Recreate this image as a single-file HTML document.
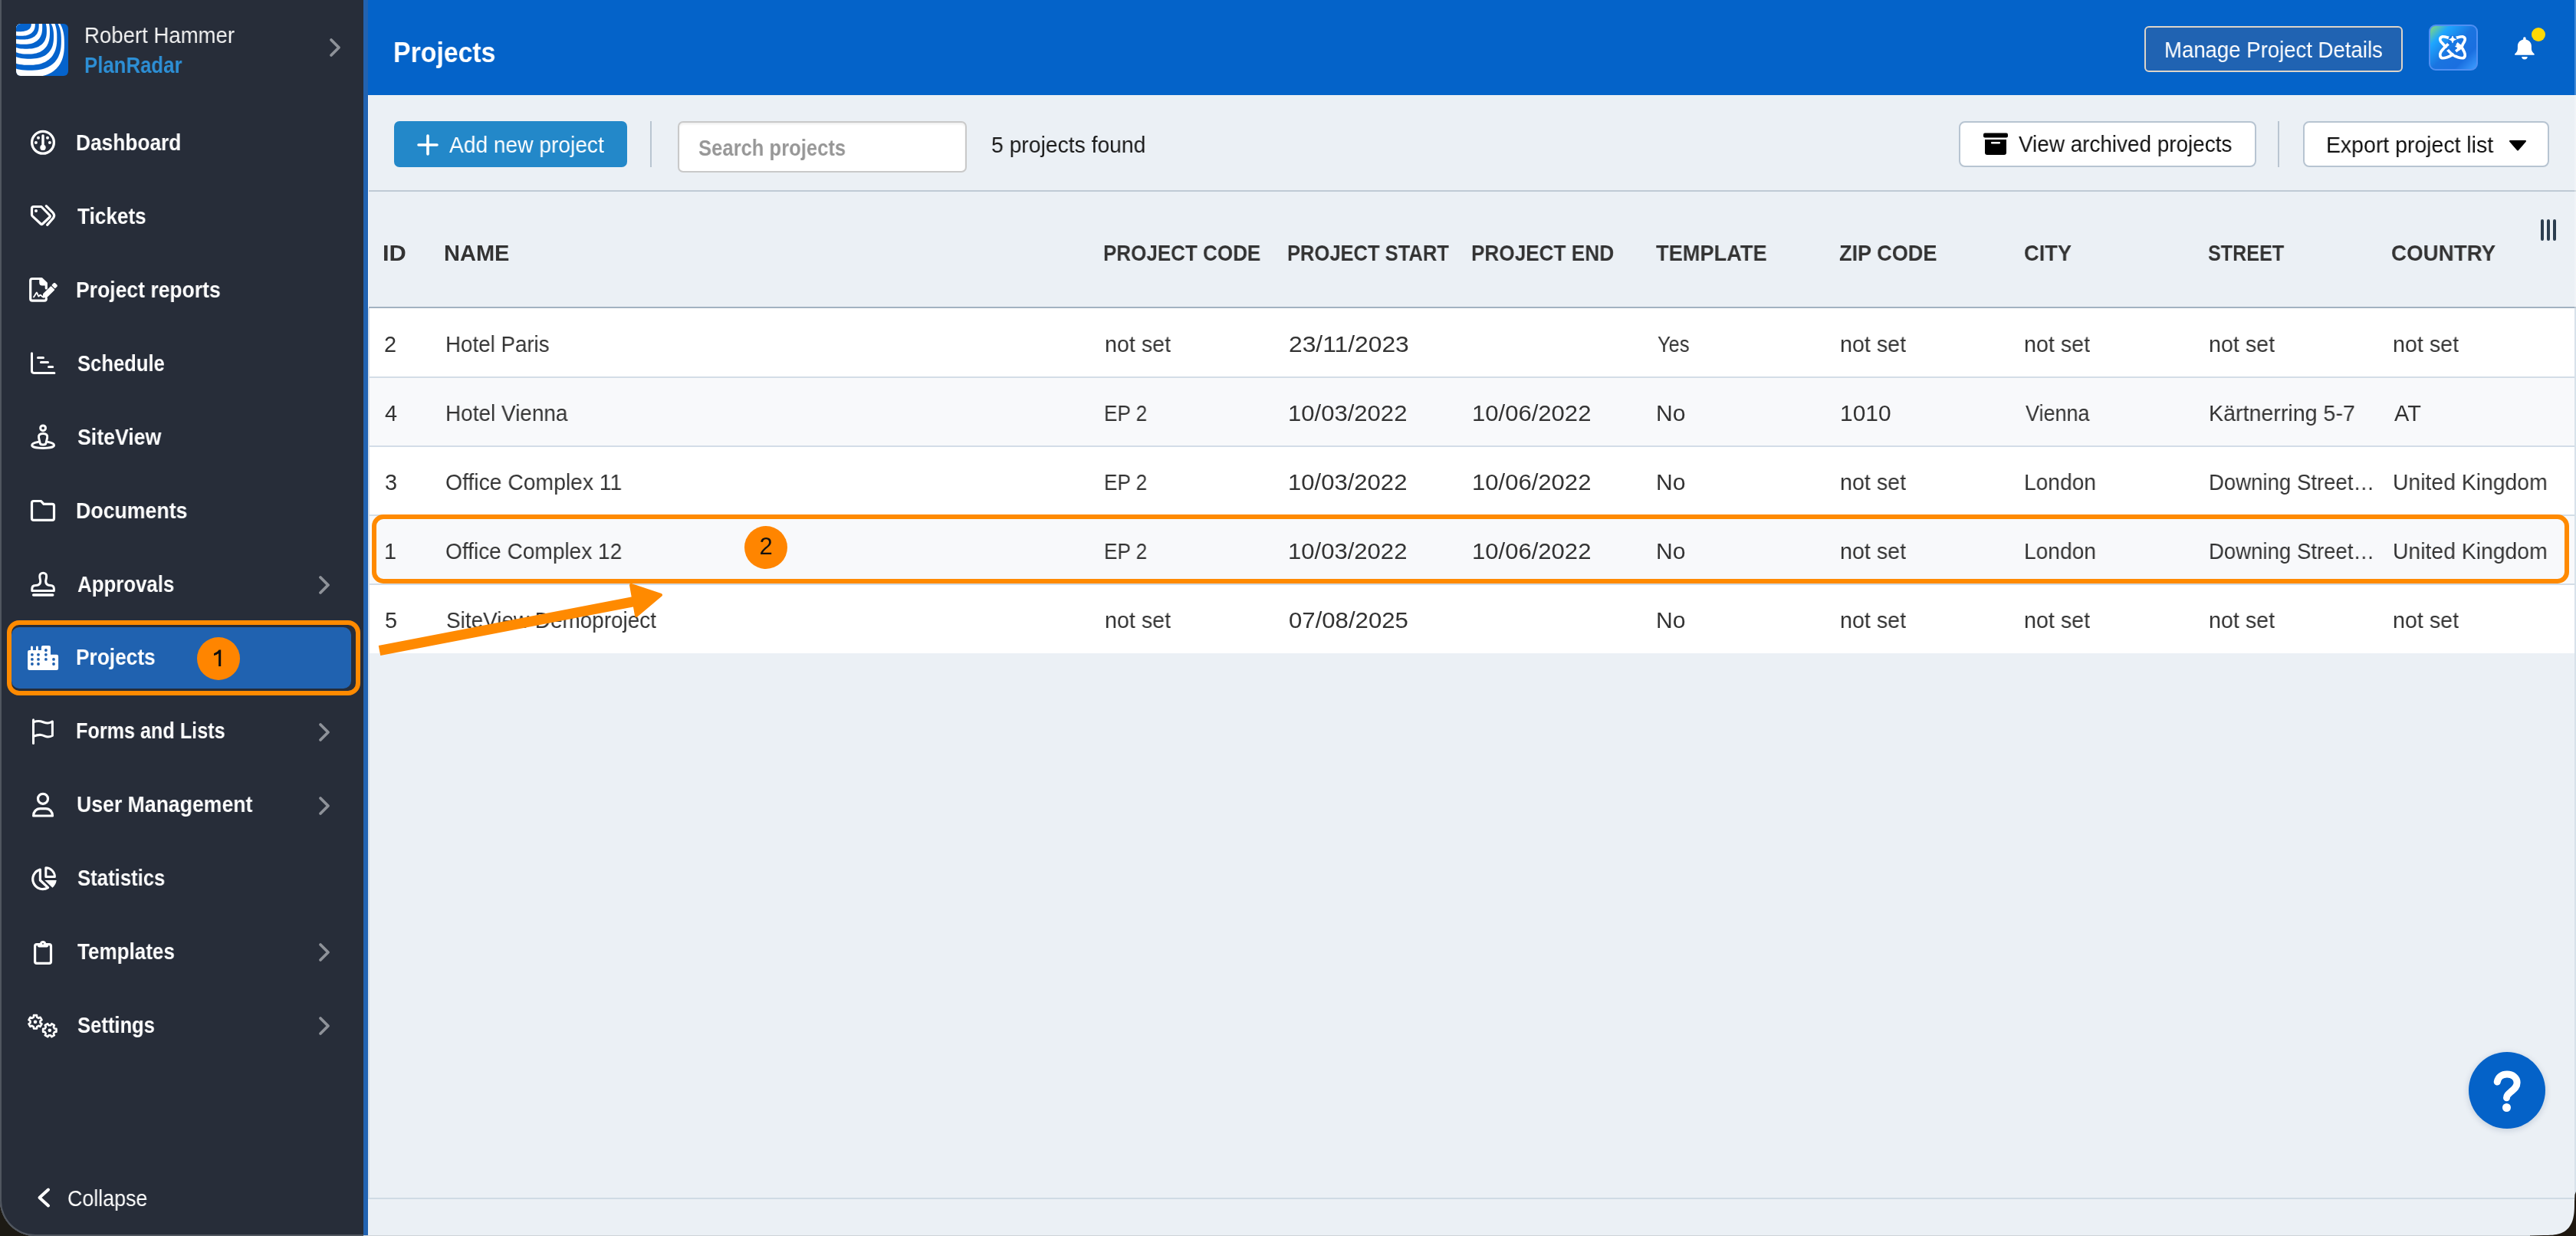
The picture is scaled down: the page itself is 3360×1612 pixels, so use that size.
<!DOCTYPE html><html><head><meta charset="utf-8"><style>
html,body{margin:0;padding:0;}
body{width:3360px;height:1612px;overflow:hidden;background:#1d1a14;position:relative;font-family:"Liberation Sans",sans-serif;}
#f{position:absolute;left:0;top:0;width:3360px;height:1612px;border-radius:0 0 0 46px;overflow:hidden;background:#ebf0f5;}
#f div, #f svg{position:absolute;}
.t{white-space:nowrap;will-change:transform;}
</style></head><body><div id="f">
<div style="left:0px;top:0px;width:474px;height:1612px;background:#272d39;"></div>
<div style="left:0px;top:0px;width:2px;height:1450px;background:#50565f;"></div>
<div style="left:0;top:1400px;width:300px;height:212px;box-sizing:border-box;border-left:2px solid #50565f;border-bottom:2px solid #50565f;border-bottom-left-radius:46px;"></div>
<div style="left:474px;top:0px;width:6px;height:1612px;background:#2263b1;"></div>
<svg style="left:21px;top:31px" width="68" height="68" viewBox="0 0 68 68"><defs><clipPath id="lc"><rect x="0" y="0" width="68" height="68" rx="6"/></clipPath></defs><g clip-path="url(#lc)"><rect width="68" height="68" fill="#0563cc"/><path d="M62.90 26.00 L62.81 31.17 L62.55 34.98 L62.11 38.38 L61.50 41.52 L60.72 44.44 L59.77 47.18 L58.64 49.76 L57.35 52.17 L55.90 54.44 L54.28 56.55 L52.50 58.50 L50.56 60.30 L48.46 61.95 L46.20 63.44 L43.79 64.77 L41.21 65.94 L38.47 66.95 L35.55 67.79 L32.43 68.46 L29.07 68.97 L25.37 69.31 L21.07 69.48 L14.93 69.48 L10.63 69.31 L6.93 68.97 L3.57 68.46 L0.45 67.79 L-2.47 66.95 L-5.21 65.94 L-7.79 64.77 L-10.20 63.44 L-12.46 61.95 L-14.56 60.30 L-16.50 58.50 L-18.28 56.55 L-19.90 54.44 L-21.35 52.17 L-22.64 49.76 L-23.77 47.18 L-24.72 44.44 L-25.50 41.52 L-26.11 38.38 L-26.55 34.98 L-26.81 31.17 L-26.90 26.00 L-26.81 20.83 L-26.55 17.02 L-26.11 13.62 L-25.50 10.48 L-24.72 7.56 L-23.77 4.82 L-22.64 2.24 L-21.35 -0.17 L-19.90 -2.44 L-18.28 -4.55 L-16.50 -6.50 L-14.56 -8.30 L-12.46 -9.95 L-10.20 -11.44 L-7.79 -12.77 L-5.21 -13.94 L-2.47 -14.95 L0.45 -15.79 L3.57 -16.46 L6.93 -16.97 L10.63 -17.31 L14.93 -17.48 L21.07 -17.48 L25.37 -17.31 L29.07 -16.97 L32.43 -16.46 L35.55 -15.79 L38.47 -14.95 L41.21 -13.94 L43.79 -12.77 L46.20 -11.44 L48.46 -9.95 L50.56 -8.30 L52.50 -6.50 L54.28 -4.55 L55.90 -2.44 L57.35 -0.17 L58.64 2.24 L59.77 4.82 L60.72 7.56 L61.50 10.48 L62.11 13.62 L62.55 17.02 L62.81 20.83 Z" fill="#fff"/><path d="M58.90 22.00 L58.82 26.60 L58.58 29.99 L58.18 33.02 L57.63 35.80 L56.91 38.40 L56.05 40.84 L55.02 43.13 L53.85 45.29 L52.52 47.30 L51.05 49.17 L49.42 50.92 L47.66 52.52 L45.75 53.98 L43.69 55.31 L41.49 56.49 L39.14 57.53 L36.65 58.43 L33.98 59.18 L31.14 59.78 L28.08 60.23 L24.72 60.53 L20.79 60.68 L15.21 60.68 L11.28 60.53 L7.92 60.23 L4.86 59.78 L2.02 59.18 L-0.65 58.43 L-3.14 57.53 L-5.49 56.49 L-7.69 55.31 L-9.75 53.98 L-11.66 52.52 L-13.42 50.92 L-15.05 49.17 L-16.52 47.30 L-17.85 45.29 L-19.02 43.13 L-20.05 40.84 L-20.91 38.40 L-21.63 35.80 L-22.18 33.02 L-22.58 29.99 L-22.82 26.60 L-22.90 22.00 L-22.82 17.40 L-22.58 14.01 L-22.18 10.98 L-21.63 8.20 L-20.91 5.60 L-20.05 3.16 L-19.02 0.87 L-17.85 -1.29 L-16.52 -3.30 L-15.05 -5.17 L-13.42 -6.92 L-11.66 -8.52 L-9.75 -9.98 L-7.69 -11.31 L-5.49 -12.49 L-3.14 -13.53 L-0.65 -14.43 L2.02 -15.18 L4.86 -15.78 L7.92 -16.23 L11.28 -16.53 L15.21 -16.68 L20.79 -16.68 L24.72 -16.53 L28.08 -16.23 L31.14 -15.78 L33.98 -15.18 L36.65 -14.43 L39.14 -13.53 L41.49 -12.49 L43.69 -11.31 L45.75 -9.98 L47.66 -8.52 L49.42 -6.92 L51.05 -5.17 L52.52 -3.30 L53.85 -1.29 L55.02 0.87 L56.05 3.16 L56.91 5.60 L57.63 8.20 L58.18 10.98 L58.58 14.01 L58.82 17.40 Z" fill="#0563cc"/><path d="M53.30 18.00 L53.23 22.25 L53.01 25.39 L52.66 28.19 L52.16 30.77 L51.51 33.17 L50.73 35.43 L49.81 37.55 L48.75 39.54 L47.56 41.40 L46.23 43.14 L44.77 44.75 L43.18 46.23 L41.46 47.59 L39.62 48.81 L37.64 49.91 L35.52 50.87 L33.28 51.70 L30.88 52.39 L28.32 52.95 L25.57 53.36 L22.54 53.64 L19.01 53.78 L13.99 53.78 L10.46 53.64 L7.43 53.36 L4.68 52.95 L2.12 52.39 L-0.28 51.70 L-2.52 50.87 L-4.64 49.91 L-6.62 48.81 L-8.46 47.59 L-10.18 46.23 L-11.77 44.75 L-13.23 43.14 L-14.56 41.40 L-15.75 39.54 L-16.81 37.55 L-17.73 35.43 L-18.51 33.17 L-19.16 30.77 L-19.66 28.19 L-20.01 25.39 L-20.23 22.25 L-20.30 18.00 L-20.23 13.75 L-20.01 10.61 L-19.66 7.81 L-19.16 5.23 L-18.51 2.83 L-17.73 0.57 L-16.81 -1.55 L-15.75 -3.54 L-14.56 -5.40 L-13.23 -7.14 L-11.77 -8.75 L-10.18 -10.23 L-8.46 -11.59 L-6.62 -12.81 L-4.64 -13.91 L-2.52 -14.87 L-0.28 -15.70 L2.12 -16.39 L4.68 -16.95 L7.43 -17.36 L10.46 -17.64 L13.99 -17.78 L19.01 -17.78 L22.54 -17.64 L25.57 -17.36 L28.32 -16.95 L30.88 -16.39 L33.28 -15.70 L35.52 -14.87 L37.64 -13.91 L39.62 -12.81 L41.46 -11.59 L43.18 -10.23 L44.77 -8.75 L46.23 -7.14 L47.56 -5.40 L48.75 -3.54 L49.81 -1.55 L50.73 0.57 L51.51 2.83 L52.16 5.23 L52.66 7.81 L53.01 10.61 L53.23 13.75 Z" fill="#fff"/><path d="M49.00 16.50 L48.94 19.97 L48.75 22.53 L48.44 24.81 L48.00 26.91 L47.45 28.88 L46.77 30.72 L45.97 32.45 L45.05 34.07 L44.01 35.59 L42.86 37.00 L41.59 38.32 L40.20 39.53 L38.71 40.63 L37.10 41.63 L35.38 42.53 L33.54 43.31 L31.59 43.99 L29.51 44.55 L27.28 45.00 L24.89 45.34 L22.25 45.57 L19.18 45.69 L14.82 45.69 L11.75 45.57 L9.11 45.34 L6.72 45.00 L4.49 44.55 L2.41 43.99 L0.46 43.31 L-1.38 42.53 L-3.10 41.63 L-4.71 40.63 L-6.20 39.53 L-7.59 38.32 L-8.86 37.00 L-10.01 35.59 L-11.05 34.07 L-11.97 32.45 L-12.77 30.72 L-13.45 28.88 L-14.00 26.91 L-14.44 24.81 L-14.75 22.53 L-14.94 19.97 L-15.00 16.50 L-14.94 13.03 L-14.75 10.47 L-14.44 8.19 L-14.00 6.09 L-13.45 4.12 L-12.77 2.28 L-11.97 0.55 L-11.05 -1.07 L-10.01 -2.59 L-8.86 -4.00 L-7.59 -5.32 L-6.20 -6.53 L-4.71 -7.63 L-3.10 -8.63 L-1.38 -9.53 L0.46 -10.31 L2.41 -10.99 L4.49 -11.55 L6.72 -12.00 L9.11 -12.34 L11.75 -12.57 L14.82 -12.69 L19.18 -12.69 L22.25 -12.57 L24.89 -12.34 L27.28 -12.00 L29.51 -11.55 L31.59 -10.99 L33.54 -10.31 L35.38 -9.53 L37.10 -8.63 L38.71 -7.63 L40.20 -6.53 L41.59 -5.32 L42.86 -4.00 L44.01 -2.59 L45.05 -1.07 L45.97 0.55 L46.77 2.28 L47.45 4.12 L48.00 6.09 L48.44 8.19 L48.75 10.47 L48.94 13.03 Z" fill="#0563cc"/><path d="M44.00 11.00 L43.94 14.39 L43.77 16.88 L43.49 19.11 L43.10 21.17 L42.59 23.08 L41.98 24.88 L41.25 26.56 L40.42 28.15 L39.48 29.63 L38.43 31.01 L37.28 32.29 L36.03 33.48 L34.67 34.55 L33.22 35.53 L31.66 36.40 L29.99 37.17 L28.22 37.83 L26.33 38.38 L24.32 38.82 L22.15 39.15 L19.76 39.38 L16.98 39.49 L13.02 39.49 L10.24 39.38 L7.85 39.15 L5.68 38.82 L3.67 38.38 L1.78 37.83 L0.01 37.17 L-1.66 36.40 L-3.22 35.53 L-4.67 34.55 L-6.03 33.48 L-7.28 32.29 L-8.43 31.01 L-9.48 29.63 L-10.42 28.15 L-11.25 26.56 L-11.98 24.88 L-12.59 23.08 L-13.10 21.17 L-13.49 19.11 L-13.77 16.88 L-13.94 14.39 L-14.00 11.00 L-13.94 7.61 L-13.77 5.12 L-13.49 2.89 L-13.10 0.83 L-12.59 -1.08 L-11.98 -2.88 L-11.25 -4.56 L-10.42 -6.15 L-9.48 -7.63 L-8.43 -9.01 L-7.28 -10.29 L-6.03 -11.48 L-4.67 -12.55 L-3.22 -13.53 L-1.66 -14.40 L0.01 -15.17 L1.78 -15.83 L3.67 -16.38 L5.68 -16.82 L7.85 -17.15 L10.24 -17.38 L13.02 -17.49 L16.98 -17.49 L19.76 -17.38 L22.15 -17.15 L24.32 -16.82 L26.33 -16.38 L28.22 -15.83 L29.99 -15.17 L31.66 -14.40 L33.22 -13.53 L34.67 -12.55 L36.03 -11.48 L37.28 -10.29 L38.43 -9.01 L39.48 -7.63 L40.42 -6.15 L41.25 -4.56 L41.98 -2.88 L42.59 -1.08 L43.10 0.83 L43.49 2.89 L43.77 5.12 L43.94 7.61 Z" fill="#fff"/><path d="M39.90 9.10 L39.85 11.90 L39.69 13.97 L39.43 15.82 L39.06 17.52 L38.59 19.10 L38.02 20.59 L37.35 21.99 L36.58 23.30 L35.70 24.53 L34.73 25.67 L33.67 26.73 L32.51 27.71 L31.25 28.60 L29.90 29.41 L28.45 30.13 L26.91 30.77 L25.26 31.31 L23.51 31.77 L21.64 32.14 L19.63 32.41 L17.42 32.60 L14.84 32.69 L11.16 32.69 L8.58 32.60 L6.37 32.41 L4.36 32.14 L2.49 31.77 L0.74 31.31 L-0.91 30.77 L-2.45 30.13 L-3.90 29.41 L-5.25 28.60 L-6.51 27.71 L-7.67 26.73 L-8.73 25.67 L-9.70 24.53 L-10.58 23.30 L-11.35 21.99 L-12.02 20.59 L-12.59 19.10 L-13.06 17.52 L-13.43 15.82 L-13.69 13.97 L-13.85 11.90 L-13.90 9.10 L-13.85 6.30 L-13.69 4.23 L-13.43 2.38 L-13.06 0.68 L-12.59 -0.90 L-12.02 -2.39 L-11.35 -3.79 L-10.58 -5.10 L-9.70 -6.33 L-8.73 -7.47 L-7.67 -8.53 L-6.51 -9.51 L-5.25 -10.40 L-3.90 -11.21 L-2.45 -11.93 L-0.91 -12.57 L0.74 -13.11 L2.49 -13.57 L4.36 -13.94 L6.37 -14.21 L8.58 -14.40 L11.16 -14.49 L14.84 -14.49 L17.42 -14.40 L19.63 -14.21 L21.64 -13.94 L23.51 -13.57 L25.26 -13.11 L26.91 -12.57 L28.45 -11.93 L29.90 -11.21 L31.25 -10.40 L32.51 -9.51 L33.67 -8.53 L34.73 -7.47 L35.70 -6.33 L36.58 -5.10 L37.35 -3.79 L38.02 -2.39 L38.59 -0.90 L39.06 0.68 L39.43 2.38 L39.69 4.23 L39.85 6.30 Z" fill="#0563cc"/><path d="M34.20 4.00 L34.15 6.71 L34.01 8.71 L33.78 10.49 L33.45 12.13 L33.03 13.66 L32.51 15.10 L31.91 16.45 L31.21 17.72 L30.43 18.90 L29.55 20.01 L28.59 21.04 L27.55 21.98 L26.42 22.84 L25.20 23.62 L23.90 24.32 L22.51 24.93 L21.03 25.46 L19.46 25.90 L17.78 26.26 L15.96 26.52 L13.97 26.70 L11.65 26.79 L8.35 26.79 L6.03 26.70 L4.04 26.52 L2.22 26.26 L0.54 25.90 L-1.03 25.46 L-2.51 24.93 L-3.90 24.32 L-5.20 23.62 L-6.42 22.84 L-7.55 21.98 L-8.59 21.04 L-9.55 20.01 L-10.43 18.90 L-11.21 17.72 L-11.91 16.45 L-12.51 15.10 L-13.03 13.66 L-13.45 12.13 L-13.78 10.49 L-14.01 8.71 L-14.15 6.71 L-14.20 4.00 L-14.15 1.29 L-14.01 -0.71 L-13.78 -2.49 L-13.45 -4.13 L-13.03 -5.66 L-12.51 -7.10 L-11.91 -8.45 L-11.21 -9.72 L-10.43 -10.90 L-9.55 -12.01 L-8.59 -13.04 L-7.55 -13.98 L-6.42 -14.84 L-5.20 -15.62 L-3.90 -16.32 L-2.51 -16.93 L-1.03 -17.46 L0.54 -17.90 L2.22 -18.26 L4.04 -18.52 L6.03 -18.70 L8.35 -18.79 L11.65 -18.79 L13.97 -18.70 L15.96 -18.52 L17.78 -18.26 L19.46 -17.90 L21.03 -17.46 L22.51 -16.93 L23.90 -16.32 L25.20 -15.62 L26.42 -14.84 L27.55 -13.98 L28.59 -13.04 L29.55 -12.01 L30.43 -10.90 L31.21 -9.72 L31.91 -8.45 L32.51 -7.10 L33.03 -5.66 L33.45 -4.13 L33.78 -2.49 L34.01 -0.71 L34.15 1.29 Z" fill="#fff"/><path d="M29.70 2.00 L29.66 4.21 L29.53 5.84 L29.32 7.29 L29.02 8.63 L28.65 9.88 L28.19 11.06 L27.64 12.16 L27.02 13.19 L26.32 14.16 L25.53 15.06 L24.67 15.90 L23.74 16.67 L22.72 17.37 L21.63 18.01 L20.46 18.58 L19.22 19.08 L17.89 19.51 L16.48 19.87 L14.97 20.16 L13.35 20.37 L11.56 20.52 L9.48 20.59 L6.52 20.59 L4.44 20.52 L2.65 20.37 L1.03 20.16 L-0.48 19.87 L-1.89 19.51 L-3.22 19.08 L-4.46 18.58 L-5.63 18.01 L-6.72 17.37 L-7.74 16.67 L-8.67 15.90 L-9.53 15.06 L-10.32 14.16 L-11.02 13.19 L-11.64 12.16 L-12.19 11.06 L-12.65 9.88 L-13.02 8.63 L-13.32 7.29 L-13.53 5.84 L-13.66 4.21 L-13.70 2.00 L-13.66 -0.21 L-13.53 -1.84 L-13.32 -3.29 L-13.02 -4.63 L-12.65 -5.88 L-12.19 -7.06 L-11.64 -8.16 L-11.02 -9.19 L-10.32 -10.16 L-9.53 -11.06 L-8.67 -11.90 L-7.74 -12.67 L-6.72 -13.37 L-5.63 -14.01 L-4.46 -14.58 L-3.22 -15.08 L-1.89 -15.51 L-0.48 -15.87 L1.03 -16.16 L2.65 -16.37 L4.44 -16.52 L6.52 -16.59 L9.48 -16.59 L11.56 -16.52 L13.35 -16.37 L14.97 -16.16 L16.48 -15.87 L17.89 -15.51 L19.22 -15.08 L20.46 -14.58 L21.63 -14.01 L22.72 -13.37 L23.74 -12.67 L24.67 -11.90 L25.53 -11.06 L26.32 -10.16 L27.02 -9.19 L27.64 -8.16 L28.19 -7.06 L28.65 -5.88 L29.02 -4.63 L29.32 -3.29 L29.53 -1.84 L29.66 -0.21 Z" fill="#0563cc"/><path d="M24.80 0.00 L24.76 1.88 L24.65 3.26 L24.47 4.50 L24.22 5.64 L23.89 6.70 L23.49 7.69 L23.02 8.63 L22.48 9.51 L21.87 10.33 L21.19 11.09 L20.44 11.81 L19.63 12.46 L18.75 13.06 L17.81 13.60 L16.80 14.08 L15.72 14.51 L14.57 14.87 L13.35 15.18 L12.04 15.42 L10.63 15.61 L9.09 15.73 L7.28 15.79 L4.72 15.79 L2.91 15.73 L1.37 15.61 L-0.04 15.42 L-1.35 15.18 L-2.57 14.87 L-3.72 14.51 L-4.80 14.08 L-5.81 13.60 L-6.75 13.06 L-7.63 12.46 L-8.44 11.81 L-9.19 11.09 L-9.87 10.33 L-10.48 9.51 L-11.02 8.63 L-11.49 7.69 L-11.89 6.70 L-12.22 5.64 L-12.47 4.50 L-12.65 3.26 L-12.76 1.88 L-12.80 0.00 L-12.76 -1.88 L-12.65 -3.26 L-12.47 -4.50 L-12.22 -5.64 L-11.89 -6.70 L-11.49 -7.69 L-11.02 -8.63 L-10.48 -9.51 L-9.87 -10.33 L-9.19 -11.09 L-8.44 -11.81 L-7.63 -12.46 L-6.75 -13.06 L-5.81 -13.60 L-4.80 -14.08 L-3.72 -14.51 L-2.57 -14.87 L-1.35 -15.18 L-0.04 -15.42 L1.37 -15.61 L2.91 -15.73 L4.72 -15.79 L7.28 -15.79 L9.09 -15.73 L10.63 -15.61 L12.04 -15.42 L13.35 -15.18 L14.57 -14.87 L15.72 -14.51 L16.80 -14.08 L17.81 -13.60 L18.75 -13.06 L19.63 -12.46 L20.44 -11.81 L21.19 -11.09 L21.87 -10.33 L22.48 -9.51 L23.02 -8.63 L23.49 -7.69 L23.89 -6.70 L24.22 -5.64 L24.47 -4.50 L24.65 -3.26 L24.76 -1.88 Z" fill="#fff"/><path d="M19.80 0.00 L19.77 1.21 L19.68 2.11 L19.52 2.90 L19.31 3.64 L19.03 4.32 L18.70 4.97 L18.30 5.57 L17.85 6.14 L17.34 6.67 L16.77 7.16 L16.14 7.62 L15.46 8.04 L14.72 8.43 L13.92 8.78 L13.07 9.09 L12.17 9.37 L11.20 9.60 L10.18 9.80 L9.08 9.96 L7.89 10.08 L6.59 10.16 L5.08 10.20 L2.92 10.20 L1.41 10.16 L0.11 10.08 L-1.08 9.96 L-2.18 9.80 L-3.20 9.60 L-4.17 9.37 L-5.07 9.09 L-5.92 8.78 L-6.72 8.43 L-7.46 8.04 L-8.14 7.62 L-8.77 7.16 L-9.34 6.67 L-9.85 6.14 L-10.30 5.57 L-10.70 4.97 L-11.03 4.32 L-11.31 3.64 L-11.52 2.90 L-11.68 2.11 L-11.77 1.21 L-11.80 0.00 L-11.77 -1.21 L-11.68 -2.11 L-11.52 -2.90 L-11.31 -3.64 L-11.03 -4.32 L-10.70 -4.97 L-10.30 -5.57 L-9.85 -6.14 L-9.34 -6.67 L-8.77 -7.16 L-8.14 -7.62 L-7.46 -8.04 L-6.72 -8.43 L-5.92 -8.78 L-5.07 -9.09 L-4.17 -9.37 L-3.20 -9.60 L-2.18 -9.80 L-1.08 -9.96 L0.11 -10.08 L1.41 -10.16 L2.92 -10.20 L5.08 -10.20 L6.59 -10.16 L7.89 -10.08 L9.08 -9.96 L10.18 -9.80 L11.20 -9.60 L12.17 -9.37 L13.07 -9.09 L13.92 -8.78 L14.72 -8.43 L15.46 -8.04 L16.14 -7.62 L16.77 -7.16 L17.34 -6.67 L17.85 -6.14 L18.30 -5.57 L18.70 -4.97 L19.03 -4.32 L19.31 -3.64 L19.52 -2.90 L19.68 -2.11 L19.77 -1.21 Z" fill="#0563cc"/></g></svg>
<div class="t" style="left:109.85px;top:31.68px;font-size:28.73px;line-height:28.73px;font-weight:400;color:#f2f2f2;transform:scaleX(0.9594);transform-origin:0 0;">Robert Hammer</div>
<div class="t" style="left:110.39px;top:71.38px;font-size:28.73px;line-height:28.73px;font-weight:700;color:#2d8fd5;transform:scaleX(0.8969);transform-origin:0 0;">PlanRadar</div>
<svg style="left:426px;top:48px" width="22" height="28" viewBox="0 0 22 28"><path d="M6 4 L16 14 L6 24" fill="none" stroke="#8e9299" stroke-width="3.8" stroke-linecap="round" stroke-linejoin="round"/></svg>
<div style="left:15px;top:818px;width:443px;height:80px;background:#2062b0;border-radius:10px;"></div>
<div style="left:9px;top:809px;width:449px;height:86px;border:6px solid #ff8a00;border-radius:16px;"></div>
<div class="t" style="left:99.36px;top:172.44px;font-size:29.02px;line-height:29.02px;font-weight:700;color:#ffffff;transform:scaleX(0.9060);transform-origin:0 0;">Dashboard</div>
<div class="t" style="left:101.00px;top:268.29px;font-size:29.02px;line-height:29.02px;font-weight:700;color:#ffffff;transform:scaleX(0.9013);transform-origin:0 0;">Tickets</div>
<div class="t" style="left:99.34px;top:364.14px;font-size:29.02px;line-height:29.02px;font-weight:700;color:#ffffff;transform:scaleX(0.9143);transform-origin:0 0;">Project reports</div>
<div class="t" style="left:100.60px;top:459.99px;font-size:29.02px;line-height:29.02px;font-weight:700;color:#ffffff;transform:scaleX(0.8824);transform-origin:0 0;">Schedule</div>
<div class="t" style="left:100.58px;top:555.84px;font-size:29.02px;line-height:29.02px;font-weight:700;color:#ffffff;transform:scaleX(0.9201);transform-origin:0 0;">SiteView</div>
<div class="t" style="left:99.33px;top:651.69px;font-size:29.02px;line-height:29.02px;font-weight:700;color:#ffffff;transform:scaleX(0.9205);transform-origin:0 0;">Documents</div>
<div class="t" style="left:100.60px;top:747.54px;font-size:29.02px;line-height:29.02px;font-weight:700;color:#ffffff;transform:scaleX(0.8897);transform-origin:0 0;">Approvals</div>
<svg style="left:412px;top:749.1px" width="22" height="28" viewBox="0 0 22 28"><path d="M6 4 L16 14 L6 24" fill="none" stroke="#8e9299" stroke-width="3.8" stroke-linecap="round" stroke-linejoin="round"/></svg>
<div class="t" style="left:99.36px;top:843.39px;font-size:29.02px;line-height:29.02px;font-weight:700;color:#ffffff;transform:scaleX(0.9056);transform-origin:0 0;">Projects</div>
<div class="t" style="left:99.43px;top:939.24px;font-size:29.02px;line-height:29.02px;font-weight:700;color:#ffffff;transform:scaleX(0.8682);transform-origin:0 0;">Forms and Lists</div>
<svg style="left:412px;top:940.8px" width="22" height="28" viewBox="0 0 22 28"><path d="M6 4 L16 14 L6 24" fill="none" stroke="#8e9299" stroke-width="3.8" stroke-linecap="round" stroke-linejoin="round"/></svg>
<div class="t" style="left:99.75px;top:1035.09px;font-size:29.02px;line-height:29.02px;font-weight:700;color:#ffffff;transform:scaleX(0.9177);transform-origin:0 0;">User Management</div>
<svg style="left:412px;top:1036.7px" width="22" height="28" viewBox="0 0 22 28"><path d="M6 4 L16 14 L6 24" fill="none" stroke="#8e9299" stroke-width="3.8" stroke-linecap="round" stroke-linejoin="round"/></svg>
<div class="t" style="left:100.60px;top:1130.94px;font-size:29.02px;line-height:29.02px;font-weight:700;color:#ffffff;transform:scaleX(0.8862);transform-origin:0 0;">Statistics</div>
<div class="t" style="left:101.00px;top:1226.79px;font-size:29.02px;line-height:29.02px;font-weight:700;color:#ffffff;transform:scaleX(0.8973);transform-origin:0 0;">Templates</div>
<svg style="left:412px;top:1228.3px" width="22" height="28" viewBox="0 0 22 28"><path d="M6 4 L16 14 L6 24" fill="none" stroke="#8e9299" stroke-width="3.8" stroke-linecap="round" stroke-linejoin="round"/></svg>
<div class="t" style="left:100.60px;top:1322.64px;font-size:29.02px;line-height:29.02px;font-weight:700;color:#ffffff;transform:scaleX(0.8818);transform-origin:0 0;">Settings</div>
<svg style="left:412px;top:1324.2px" width="22" height="28" viewBox="0 0 22 28"><path d="M6 4 L16 14 L6 24" fill="none" stroke="#8e9299" stroke-width="3.8" stroke-linecap="round" stroke-linejoin="round"/></svg>
<svg style="left:30px;top:160px" width="50" height="50" viewBox="0 0 50 50" fill="none" stroke="#fff" stroke-width="3.2" stroke-linecap="round" stroke-linejoin="round"><circle cx="26" cy="25.8" r="14.4" stroke-width="3.3"/><path d="M26 17 V31" stroke-width="3.4"/><circle cx="26" cy="32.4" r="3.7" fill="#fff" stroke="none"/><circle cx="20" cy="19.8" r="2" fill="#fff" stroke="none"/><circle cx="32" cy="19.8" r="2" fill="#fff" stroke="none"/><circle cx="16.9" cy="26.1" r="2" fill="#fff" stroke="none"/><circle cx="34.9" cy="26.1" r="2" fill="#fff" stroke="none"/></svg>
<svg style="left:30px;top:257px" width="50" height="50" viewBox="0 0 50 50" fill="none" stroke="#fff" stroke-width="3.2" stroke-linecap="round" stroke-linejoin="round"><path d="M11.5 15 Q11.5 12.5 14 12.5 L23.9 12.5 L35 24 Q35.8 25 35 26 L25.5 35 Q24.3 36 23.2 35 L12.3 24.8 Q11.5 24 11.5 23 Z"/><circle cx="17" cy="18" r="2" fill="#fff" stroke="none"/><path d="M30.3 11.7 L39.3 20.7 Q41.8 23.6 39.6 27.3 L31.6 36.4"/></svg>
<svg style="left:30px;top:353px" width="50" height="50" viewBox="0 0 50 50" fill="none" stroke="#fff" stroke-width="3.2" stroke-linecap="round" stroke-linejoin="round"><path d="M30.3 23 V16.5 L24 10.5 H12.2 Q9.7 10.5 9.7 13 V36.7 Q9.7 39.2 12.2 39.2 H27.8 Q30.3 39.2 30.3 36.7 V36" /><path d="M21.8 10.5 V16.5 Q21.8 19 24.3 19 H30.5 V16.5 L24.5 10.5 Z" fill="#fff" stroke-width="1"/><path d="M14 34.3 C15.5 32.5 16.8 29.5 18 28.6 C19 29.5 19.6 33.5 20.5 33.6 C21.3 33.6 21.8 31.5 22.6 31.6 C23.5 31.8 24 33.8 26.5 34.3" stroke-width="1.9"/><path d="M26.3 34.8 L27 30.2 L36.5 21 L40.4 24.9 L31 34.2 Z" fill="#fff" stroke-width="1.5"/><path d="M38.6 19 L40.6 17 Q41 16.7 41.4 17 L43.7 19.3 Q44 19.7 43.7 20.1 L41.7 22.1 Z" fill="#fff" stroke-width="2"/></svg>
<svg style="left:30px;top:449px" width="50" height="50" viewBox="0 0 50 50" fill="none" stroke="#fff" stroke-width="3.2" stroke-linecap="round" stroke-linejoin="round"><path d="M11.5 11.7 V34.8 Q11.5 37.4 14.1 37.4 H40.9" stroke-width="3"/><path d="M19.5 17.4 H26.5 M23.4 23.5 H32.5 M33.5 29.6 H38.7" stroke-width="3"/></svg>
<svg style="left:30px;top:545px" width="50" height="50" viewBox="0 0 50 50" fill="none" stroke="#fff" stroke-width="3.2" stroke-linecap="round" stroke-linejoin="round"><circle cx="26.1" cy="13.3" r="3.4" stroke-width="3"/><path d="M22.2 33 L20.6 26 C19.8 22.3 22 20.6 26.1 20.6 C30.2 20.6 32.4 22.3 31.6 26 L30 33 C29.7 34.6 28.5 35 26.1 35 C23.7 35 22.5 34.6 22.2 33 Z" stroke-width="3"/><path d="M19.5 31.6 C14.5 32.5 11.7 34 11.7 35.7 C11.7 38 18.2 39.4 26.1 39.4 C34 39.4 40.5 38 40.5 35.7 C40.5 34 37.7 32.5 32.7 31.6" stroke-width="3"/></svg>
<svg style="left:30px;top:641px" width="50" height="50" viewBox="0 0 50 50" fill="none" stroke="#fff" stroke-width="3.2" stroke-linecap="round" stroke-linejoin="round"><path d="M11.5 15 Q11.5 12.5 14 12.5 L23.5 12.5 L27 16.3 L38 16.3 Q40.5 16.3 40.5 18.8 L40.5 34.9 Q40.5 37.4 38 37.4 L14 37.4 Q11.5 37.4 11.5 34.9 Z"/></svg>
<svg style="left:30px;top:737px" width="50" height="50" viewBox="0 0 50 50" fill="none" stroke="#fff" stroke-width="3.2" stroke-linecap="round" stroke-linejoin="round"><path d="M22.7 21 C22.7 19 21.8 17.6 21.8 14.5 C21.8 12 23.7 10.2 26.2 10.2 C28.7 10.2 30.6 12 30.6 14.5 C30.6 17.6 29.7 19 29.7 21 C29.7 24.3 32 26.4 36 26.4 C39 26.4 40.4 28.6 40.4 31 L40.4 33.6 L11.8 33.6 L11.8 31 C11.8 28.6 13.2 26.4 16.4 26.4 C20.4 26.4 22.7 24.3 22.7 21 Z" stroke-width="3"/><path d="M13.7 39 H38.7" stroke-width="3.6"/></svg>
<svg style="left:30px;top:833px" width="50" height="50" viewBox="0 0 50 50" fill="none" stroke="#fff" stroke-width="3.2" stroke-linecap="round" stroke-linejoin="round"><path d="M6.1 17 Q6.1 15 8.1 15 L10.1 15 L10.1 10.3 Q11.5 8.6 12.9 10.3 L12.9 15 L17 15 L17 10.3 Q18.4 8.6 19.8 10.3 L19.8 15 L23.9 15 L23.9 11 Q23.9 8.9 26 8.9 L33.9 8.9 Q36 8.9 36 11 L36 20.8 L44 20.8 Q46.1 20.8 46.1 22.9 L46.1 38.4 Q46.1 40.9 43.6 40.9 L8.6 40.9 Q6.1 40.9 6.1 38.4 Z" fill="#fff" stroke="none"/><circle cx="11.9" cy="20.8" r="1.9" fill="#1f5fae" stroke="none"/><circle cx="11.9" cy="26.9" r="1.9" fill="#1f5fae" stroke="none"/><circle cx="11.9" cy="33" r="1.9" fill="#1f5fae" stroke="none"/><circle cx="20" cy="20.8" r="1.9" fill="#1f5fae" stroke="none"/><circle cx="20" cy="26.9" r="1.9" fill="#1f5fae" stroke="none"/><circle cx="20" cy="33" r="1.9" fill="#1f5fae" stroke="none"/><circle cx="29.9" cy="15" r="1.9" fill="#1f5fae" stroke="none"/><circle cx="29.9" cy="20.8" r="1.9" fill="#1f5fae" stroke="none"/><circle cx="29.9" cy="26.9" r="1.9" fill="#1f5fae" stroke="none"/><circle cx="40" cy="26.9" r="1.9" fill="#1f5fae" stroke="none"/><circle cx="40" cy="33" r="1.9" fill="#1f5fae" stroke="none"/></svg>
<svg style="left:30px;top:929px" width="50" height="50" viewBox="0 0 50 50" fill="none" stroke="#fff" stroke-width="3.2" stroke-linecap="round" stroke-linejoin="round"><path d="M13.5 9.8 V40.4" stroke-width="3"/><path d="M13.5 12.8 C17 11.5 20 11.2 23 11.8 C27 12.6 29 14.4 32.5 14 C35 13.8 36.5 12.8 38.4 12 L38.4 30.5 C36.5 31.5 35 32 32.5 32 C29 32 27 29.6 23 29.4 C20 29.2 17 30 13.5 31.3" stroke-width="3"/></svg>
<svg style="left:30px;top:1025px" width="50" height="50" viewBox="0 0 50 50" fill="none" stroke="#fff" stroke-width="3.2" stroke-linecap="round" stroke-linejoin="round"><circle cx="26" cy="16.8" r="6.5"/><path d="M13.6 39 C13.6 34 17 29.6 22.5 29.6 L29.6 29.6 C35 29.6 38.5 34 38.5 39 Z"/></svg>
<svg style="left:30px;top:1121px" width="50" height="50" viewBox="0 0 50 50" fill="none" stroke="#fff" stroke-width="3.2" stroke-linecap="round" stroke-linejoin="round"><path d="M22.4 13 A13 13 0 1 0 32.6 36.6 L22.4 27 Z" stroke-width="3.2"/><path d="M29.8 10.8 A11.6 11.6 0 0 1 41.4 22.4 L29.8 22.4 Z" stroke-width="3"/><path d="M28.3 27 L43.7 27 A15.4 15.4 0 0 1 38.4 36.8 Z" fill="#fff" stroke="none"/></svg>
<svg style="left:30px;top:1217px" width="50" height="50" viewBox="0 0 50 50" fill="none" stroke="#fff" stroke-width="3.2" stroke-linecap="round" stroke-linejoin="round"><path d="M15.6 17 Q15.6 14.6 18 14.6 L34.1 14.6 Q36.5 14.6 36.5 17 L36.5 36.9 Q36.5 39.3 34.1 39.3 L18 39.3 Q15.6 39.3 15.6 36.9 Z"/><path d="M19 13 H22 A4.3 4.3 0 0 1 30.2 13 H33 V16.5 Q33 18.6 31 18.6 H21 Q19 18.6 19 16.5 Z" fill="#fff" stroke="none"/><circle cx="26" cy="13.8" r="0.9" fill="#272d39" stroke="none"/></svg>
<svg style="left:30px;top:1313px" width="50" height="50" viewBox="0 0 50 50" fill="none" stroke="#fff" stroke-width="3.2" stroke-linecap="round" stroke-linejoin="round"><path d="M14.00 11.13 L18.00 11.13 L18.15 13.56 L20.33 14.82 L22.51 13.73 L24.51 17.20 L22.48 18.54 L22.48 21.06 L24.51 22.40 L22.51 25.87 L20.33 24.78 L18.15 26.04 L18.00 28.47 L14.00 28.47 L13.85 26.04 L11.67 24.78 L9.49 25.87 L7.49 22.40 L9.52 21.06 L9.52 18.54 L7.49 17.20 L9.49 13.73 L11.67 14.82 L13.85 13.56 Z" stroke-width="2.6"/><circle cx="16" cy="19.8" r="2.3" fill="#fff" stroke="none"/><path d="M43.47 28.70 L43.47 32.70 L41.04 32.85 L39.78 35.03 L40.87 37.21 L37.40 39.21 L36.06 37.18 L33.54 37.18 L32.20 39.21 L28.73 37.21 L29.82 35.03 L28.56 32.85 L26.13 32.70 L26.13 28.70 L28.56 28.55 L29.82 26.37 L28.73 24.19 L32.20 22.19 L33.54 24.22 L36.06 24.22 L37.40 22.19 L40.87 24.19 L39.78 26.37 L41.04 28.55 Z" stroke-width="2.6"/><circle cx="34.8" cy="30.7" r="2.3" fill="#fff" stroke="none"/></svg>
<div style="left:257px;top:831px;width:56px;height:56px;border-radius:50%;background:#ff8500;"></div>
<svg style="left:270px;top:840px" width="30" height="36" viewBox="270 840 30 36"><path d="M288.2 847.4 L288.2 869 L285.1 869 L285.1 852.2 Q282.5 854.3 279 855 L279 852.3 Q283.2 850.9 285.6 847.4 Z" fill="#111"/></svg>
<svg style="left:44px;top:1546px" width="26" height="32" viewBox="0 0 26 32"><path d="M19 5.5 L7.5 16 L19 26.5" fill="none" stroke="#fff" stroke-width="4" stroke-linecap="round" stroke-linejoin="round"/></svg>
<div class="t" style="left:87.74px;top:1548.68px;font-size:28.73px;line-height:28.73px;font-weight:400;color:#ffffff;transform:scaleX(0.9332);transform-origin:0 0;">Collapse</div>
<div style="left:480px;top:0px;width:2880px;height:124px;background:#0463c9;"></div>
<div class="t" style="left:512.89px;top:49.69px;font-size:36.98px;line-height:36.98px;font-weight:700;color:#ffffff;transform:scaleX(0.9146);transform-origin:0 0;">Projects</div>
<div style="left:2797px;top:34px;width:333px;height:56px;background:#2063b2;border:2px solid #ddd5ca;border-radius:6px;"></div>
<div class="t" style="left:2822.85px;top:50.68px;font-size:28.73px;line-height:28.73px;font-weight:400;color:#ffffff;transform:scaleX(0.9594);transform-origin:0 0;">Manage Project Details</div>
<div style="left:3168px;top:32px;width:60px;height:56px;border:2px solid #4f8ff2;border-radius:9px;background:linear-gradient(135deg,#86db77 0%,#1ea6ff 22%,#1a74e0 50%,#1a6fe0 75%,#3d9dff 100%);"></div>
<svg style="left:3170px;top:34px" width="60" height="56" viewBox="0 0 60 56" fill="none" stroke-linecap="round" stroke-linejoin="round"><path d="M29.00 17.60 C26.85 16.17 25.00 15.63 22.80 15.00 C20.60 14.37 17.47 13.58 15.80 13.80 C14.13 14.02 13.17 15.23 12.80 16.30 C12.43 17.37 12.95 19.02 13.60 20.20 C14.25 21.38 15.70 22.28 16.70 23.40 C17.70 24.52 18.53 25.53 19.60 26.90 C20.67 28.27 21.53 29.88 23.10 31.60 C24.67 33.32 26.82 35.68 29.00 37.20 C31.18 38.72 33.90 39.97 36.20 40.70 C38.50 41.43 41.30 41.95 42.80 41.60 C44.30 41.25 44.95 39.88 45.20 38.60 C45.45 37.32 45.07 35.75 44.30 33.90 C43.53 32.05 42.03 29.22 40.60 27.50 C39.17 25.78 37.63 25.25 35.70 23.60 C33.77 21.95 31.15 19.03 29.00 17.60" stroke="#fff" stroke-width="3.7"/><path d="M29.00 17.60 C31.07 16.10 33.00 15.63 35.20 15.00 C37.40 14.37 40.53 13.58 42.20 13.80 C43.87 14.02 44.83 15.23 45.20 16.30 C45.57 17.37 44.85 19.02 44.40 20.20 C43.95 21.38 43.13 22.18 42.50 23.40 C41.87 24.62 41.88 26.13 40.60 27.50 C39.32 28.87 36.73 29.98 34.80 31.60 C32.87 33.22 31.17 35.68 29.00 37.20 C26.83 38.72 24.10 39.97 21.80 40.70 C19.50 41.43 16.70 41.95 15.20 41.60 C13.70 41.25 13.05 39.88 12.80 38.60 C12.55 37.32 12.57 35.85 13.70 33.90 C14.83 31.95 18.08 28.55 19.60 26.90 C21.12 25.25 21.23 25.55 22.80 24.00 C24.37 22.45 26.93 19.10 29.00 17.60" stroke="#fff" stroke-width="3.7"/><g stroke="#1876e2" stroke-width="5.4" stroke-linecap="butt"><path d="M20.9 28.7 L22.6 31"/><path d="M23.9 23.6 L28.5 18.8"/><path d="M29.5 18.8 L34.2 22.9"/><path d="M33.2 33 L30.4 35.8"/></g><circle cx="29" cy="17.4" r="5.6" fill="#1a7ae6"/><path d="M29 13.3 Q29.5 16.9 33.1 17.4 Q29.5 17.9 29 21.5 Q28.5 17.9 24.9 17.4 Q28.5 16.9 29 13.3 Z" fill="#fff" stroke="#fff" stroke-width="1.3"/><path d="M36.2 22.8 Q36.6 25.9 39.6 26.3 Q36.6 26.7 36.2 29.8 Q35.8 26.7 32.8 26.3 Q35.8 25.9 36.2 22.8 Z" fill="#fff" stroke="#fff" stroke-width="1.2"/></svg>
<svg style="left:3270px;top:34px" width="56" height="50" viewBox="0 0 56 50"><path d="M22.9 14.2 C24 14.2 24.6 15 24.6 16 L24.6 17.6 C29 18.6 31.9 21.8 31.9 26 L31.9 29 C31.9 32 33 34 35.3 36.1 Q36.3 37.2 35.3 37.7 L10.5 37.7 Q9.5 37.2 10.5 36.1 C12.8 34 13.9 32 13.9 29 L13.9 26 C13.9 21.8 16.8 18.6 21.2 17.6 L21.2 16 C21.2 15 21.8 14.2 22.9 14.2 Z" fill="#fff"/><path d="M19.2 40 L26.7 40 A3.75 3.4 0 0 1 19.2 40 Z" fill="#fff"/></svg>
<div style="left:3302px;top:36px;width:18px;height:18px;border-radius:50%;background:#ffd806;"></div>
<div style="left:480px;top:124px;width:2880px;height:1px;background:#e9eef3;"></div>
<div style="left:514px;top:158px;width:304px;height:60px;background:#2388c9;border-radius:7px;"></div>
<svg style="left:543px;top:174px" width="30" height="30" viewBox="0 0 30 30"><path d="M15 3 V27 M3 15 H27" stroke="#fff" stroke-width="3.6" stroke-linecap="round"/></svg>
<div class="t" style="left:586.00px;top:174.68px;font-size:28.73px;line-height:28.73px;font-weight:400;color:#ffffff;transform:scaleX(0.9799);transform-origin:0 0;">Add new project</div>
<div style="left:848px;top:158px;width:2px;height:60px;background:#b9c5d1;"></div>
<div style="left:884px;top:158px;width:373px;height:63px;background:#fff;border:2px solid #c9c9c9;border-radius:7px;box-shadow:inset 0 2px 3px rgba(0,0,0,0.07);"></div>
<div class="t" style="left:910.60px;top:178.25px;font-size:29.59px;line-height:29.59px;font-weight:700;color:#979797;transform:scaleX(0.8655);transform-origin:0 0;">Search projects</div>
<div class="t" style="left:1292.62px;top:174.35px;font-size:29.59px;line-height:29.59px;font-weight:400;color:#1a1a1a;transform:scaleX(0.9570);transform-origin:0 0;">5 projects found</div>
<div style="left:2555px;top:158px;width:384px;height:56px;background:#fff;border:2px solid #b7c4d1;border-radius:8px;"></div>
<svg style="left:2586px;top:172px" width="34" height="32" viewBox="0 0 34 32"><rect x="1" y="1.5" width="32" height="6" rx="2" fill="#000"/><path d="M3 10 H31 V27 Q31 30 28 30 H6 Q3 30 3 27 Z" fill="#000"/><rect x="11" y="13" width="12" height="2.5" rx="1" fill="#fff"/></svg>
<div class="t" style="left:2633.00px;top:174.44px;font-size:29.02px;line-height:29.02px;font-weight:400;color:#111111;transform:scaleX(0.9606);transform-origin:0 0;">View archived projects</div>
<div style="left:2971px;top:158px;width:2px;height:60px;background:#b9c5d1;"></div>
<div style="left:3004px;top:158px;width:317px;height:56px;background:#fff;border:2px solid #b7c4d1;border-radius:8px;"></div>
<div class="t" style="left:3034.48px;top:174.64px;font-size:29.02px;line-height:29.02px;font-weight:400;color:#111111;transform:scaleX(0.9801);transform-origin:0 0;">Export project list</div>
<svg style="left:3272px;top:182px" width="24" height="16" viewBox="0 0 24 16"><path d="M2 2 H22 L12 13.5 Z" fill="#000" stroke="#000" stroke-width="2" stroke-linejoin="round"/></svg>
<div style="left:480px;top:248px;width:2880px;height:2px;background:#bfcad5;"></div>
<div style="left:480px;top:400px;width:2880px;height:2px;background:#a2b2c1;"></div>
<div class="t" style="left:499.08px;top:316.44px;font-size:29.02px;line-height:29.02px;font-weight:700;color:#333333;transform:scaleX(1.0611);transform-origin:0 0;">ID</div>
<div class="t" style="left:579.19px;top:316.44px;font-size:29.02px;line-height:29.02px;font-weight:700;color:#333333;">NAME</div>
<div class="t" style="left:1438.87px;top:316.44px;font-size:29.02px;line-height:29.02px;font-weight:700;color:#333333;transform:scaleX(0.8967);transform-origin:0 0;">PROJECT CODE</div>
<div class="t" style="left:1678.90px;top:316.44px;font-size:29.02px;line-height:29.02px;font-weight:700;color:#333333;transform:scaleX(0.8800);transform-origin:0 0;">PROJECT START</div>
<div class="t" style="left:1919.37px;top:316.44px;font-size:29.02px;line-height:29.02px;font-weight:700;color:#333333;transform:scaleX(0.9014);transform-origin:0 0;">PROJECT END</div>
<div class="t" style="left:2160.00px;top:316.44px;font-size:29.02px;line-height:29.02px;font-weight:700;color:#333333;transform:scaleX(0.9384);transform-origin:0 0;">TEMPLATE</div>
<div class="t" style="left:2399.38px;top:316.44px;font-size:29.02px;line-height:29.02px;font-weight:700;color:#333333;transform:scaleX(0.9328);transform-origin:0 0;">ZIP CODE</div>
<div class="t" style="left:2639.75px;top:316.44px;font-size:29.02px;line-height:29.02px;font-weight:700;color:#333333;transform:scaleX(0.9386);transform-origin:0 0;">CITY</div>
<div class="t" style="left:2879.91px;top:316.44px;font-size:29.02px;line-height:29.02px;font-weight:700;color:#333333;transform:scaleX(0.8660);transform-origin:0 0;">STREET</div>
<div class="t" style="left:3119.13px;top:316.44px;font-size:29.02px;line-height:29.02px;font-weight:700;color:#333333;transform:scaleX(0.9562);transform-origin:0 0;">COUNTRY</div>
<svg style="left:3312px;top:285px" width="24" height="30" viewBox="0 0 24 30"><path d="M4 3 V27 M12 3 V27 M20 3 V27" stroke="#2c3e50" stroke-width="4" stroke-linecap="round"/></svg>
<div style="left:480px;top:402px;width:2880px;height:90px;background:#ffffff;"></div>
<div class="t" style="left:501.15px;top:434.76px;font-size:28.88px;line-height:28.88px;font-weight:400;color:#333333;">2</div>
<div class="t" style="left:580.53px;top:434.76px;font-size:28.88px;line-height:28.88px;font-weight:400;color:#333333;transform:scaleX(0.9604);transform-origin:0 0;">Hotel Paris</div>
<div class="t" style="left:1440.71px;top:434.76px;font-size:28.88px;line-height:28.88px;font-weight:400;color:#333333;transform:scaleX(0.9932);transform-origin:0 0;">not set</div>
<div class="t" style="left:1680.51px;top:434.76px;font-size:28.88px;line-height:28.88px;font-weight:400;color:#333333;transform:scaleX(1.1011);transform-origin:0 0;">23/11/2023</div>
<div class="t" style="left:2161.60px;top:434.76px;font-size:28.88px;line-height:28.88px;font-weight:400;color:#333333;transform:scaleX(0.8808);transform-origin:0 0;">Yes</div>
<div class="t" style="left:2400.21px;top:434.76px;font-size:28.88px;line-height:28.88px;font-weight:400;color:#333333;transform:scaleX(0.9932);transform-origin:0 0;">not set</div>
<div class="t" style="left:2640.21px;top:434.76px;font-size:28.88px;line-height:28.88px;font-weight:400;color:#333333;transform:scaleX(0.9932);transform-origin:0 0;">not set</div>
<div class="t" style="left:2881.21px;top:434.76px;font-size:28.88px;line-height:28.88px;font-weight:400;color:#333333;transform:scaleX(0.9932);transform-origin:0 0;">not set</div>
<div class="t" style="left:3120.81px;top:434.76px;font-size:28.88px;line-height:28.88px;font-weight:400;color:#333333;transform:scaleX(0.9932);transform-origin:0 0;">not set</div>
<div style="left:480px;top:492px;width:2880px;height:90px;background:#f8f9fb;"></div>
<div class="t" style="left:502.05px;top:524.76px;font-size:28.88px;line-height:28.88px;font-weight:400;color:#333333;">4</div>
<div class="t" style="left:580.52px;top:524.76px;font-size:28.88px;line-height:28.88px;font-weight:400;color:#333333;transform:scaleX(0.9671);transform-origin:0 0;">Hotel Vienna</div>
<div class="t" style="left:1440.46px;top:524.76px;font-size:28.88px;line-height:28.88px;font-weight:400;color:#333333;transform:scaleX(0.9058);transform-origin:0 0;">EP 2</div>
<div class="t" style="left:1680.06px;top:524.76px;font-size:28.88px;line-height:28.88px;font-weight:400;color:#333333;transform:scaleX(1.0753);transform-origin:0 0;">10/03/2022</div>
<div class="t" style="left:1920.06px;top:524.76px;font-size:28.88px;line-height:28.88px;font-weight:400;color:#333333;transform:scaleX(1.0753);transform-origin:0 0;">10/06/2022</div>
<div class="t" style="left:2159.65px;top:524.76px;font-size:28.88px;line-height:28.88px;font-weight:400;color:#333333;transform:scaleX(1.0422);transform-origin:0 0;">No</div>
<div class="t" style="left:2400.13px;top:524.76px;font-size:28.88px;line-height:28.88px;font-weight:400;color:#333333;transform:scaleX(1.0354);transform-origin:0 0;">1010</div>
<div class="t" style="left:2642.00px;top:524.76px;font-size:28.88px;line-height:28.88px;font-weight:400;color:#333333;transform:scaleX(0.9344);transform-origin:0 0;">Vienna</div>
<div class="t" style="left:2880.76px;top:524.76px;font-size:28.88px;line-height:28.88px;font-weight:400;color:#333333;transform:scaleX(0.9911);transform-origin:0 0;">Kärtnerring 5-7</div>
<div class="t" style="left:3122.60px;top:524.76px;font-size:28.88px;line-height:28.88px;font-weight:400;color:#333333;transform:scaleX(1.0040);transform-origin:0 0;">AT</div>
<div style="left:480px;top:582px;width:2880px;height:90px;background:#ffffff;"></div>
<div class="t" style="left:501.60px;top:614.76px;font-size:28.88px;line-height:28.88px;font-weight:400;color:#333333;">3</div>
<div class="t" style="left:581.37px;top:614.76px;font-size:28.88px;line-height:28.88px;font-weight:400;color:#333333;transform:scaleX(0.9805);transform-origin:0 0;">Office Complex 11</div>
<div class="t" style="left:1440.46px;top:614.76px;font-size:28.88px;line-height:28.88px;font-weight:400;color:#333333;transform:scaleX(0.9058);transform-origin:0 0;">EP 2</div>
<div class="t" style="left:1680.06px;top:614.76px;font-size:28.88px;line-height:28.88px;font-weight:400;color:#333333;transform:scaleX(1.0753);transform-origin:0 0;">10/03/2022</div>
<div class="t" style="left:1920.06px;top:614.76px;font-size:28.88px;line-height:28.88px;font-weight:400;color:#333333;transform:scaleX(1.0753);transform-origin:0 0;">10/06/2022</div>
<div class="t" style="left:2159.65px;top:614.76px;font-size:28.88px;line-height:28.88px;font-weight:400;color:#333333;transform:scaleX(1.0422);transform-origin:0 0;">No</div>
<div class="t" style="left:2400.21px;top:614.76px;font-size:28.88px;line-height:28.88px;font-weight:400;color:#333333;transform:scaleX(0.9932);transform-origin:0 0;">not set</div>
<div class="t" style="left:2639.80px;top:614.76px;font-size:28.88px;line-height:28.88px;font-weight:400;color:#333333;transform:scaleX(0.9753);transform-origin:0 0;">London</div>
<div class="t" style="left:2880.85px;top:614.76px;font-size:28.88px;line-height:28.88px;font-weight:400;color:#333333;transform:scaleX(0.9545);transform-origin:0 0;">Downing Street…</div>
<div class="t" style="left:3120.83px;top:614.76px;font-size:28.88px;line-height:28.88px;font-weight:400;color:#333333;transform:scaleX(0.9814);transform-origin:0 0;">United Kingdom</div>
<div style="left:480px;top:672px;width:2880px;height:90px;background:#f8f9fb;"></div>
<div class="t" style="left:500.70px;top:704.76px;font-size:28.88px;line-height:28.88px;font-weight:400;color:#333333;">1</div>
<div class="t" style="left:581.38px;top:704.76px;font-size:28.88px;line-height:28.88px;font-weight:400;color:#333333;transform:scaleX(0.9715);transform-origin:0 0;">Office Complex 12</div>
<div class="t" style="left:1440.46px;top:704.76px;font-size:28.88px;line-height:28.88px;font-weight:400;color:#333333;transform:scaleX(0.9058);transform-origin:0 0;">EP 2</div>
<div class="t" style="left:1680.06px;top:704.76px;font-size:28.88px;line-height:28.88px;font-weight:400;color:#333333;transform:scaleX(1.0753);transform-origin:0 0;">10/03/2022</div>
<div class="t" style="left:1920.06px;top:704.76px;font-size:28.88px;line-height:28.88px;font-weight:400;color:#333333;transform:scaleX(1.0753);transform-origin:0 0;">10/06/2022</div>
<div class="t" style="left:2159.65px;top:704.76px;font-size:28.88px;line-height:28.88px;font-weight:400;color:#333333;transform:scaleX(1.0422);transform-origin:0 0;">No</div>
<div class="t" style="left:2400.21px;top:704.76px;font-size:28.88px;line-height:28.88px;font-weight:400;color:#333333;transform:scaleX(0.9932);transform-origin:0 0;">not set</div>
<div class="t" style="left:2639.80px;top:704.76px;font-size:28.88px;line-height:28.88px;font-weight:400;color:#333333;transform:scaleX(0.9753);transform-origin:0 0;">London</div>
<div class="t" style="left:2880.85px;top:704.76px;font-size:28.88px;line-height:28.88px;font-weight:400;color:#333333;transform:scaleX(0.9545);transform-origin:0 0;">Downing Street…</div>
<div class="t" style="left:3120.83px;top:704.76px;font-size:28.88px;line-height:28.88px;font-weight:400;color:#333333;transform:scaleX(0.9814);transform-origin:0 0;">United Kingdom</div>
<div style="left:480px;top:762px;width:2880px;height:90px;background:#ffffff;"></div>
<div class="t" style="left:501.60px;top:794.76px;font-size:28.88px;line-height:28.88px;font-weight:400;color:#333333;">5</div>
<div class="t" style="left:581.83px;top:794.76px;font-size:28.88px;line-height:28.88px;font-weight:400;color:#333333;transform:scaleX(0.9663);transform-origin:0 0;">SiteView Demoproject</div>
<div class="t" style="left:1440.71px;top:794.76px;font-size:28.88px;line-height:28.88px;font-weight:400;color:#333333;transform:scaleX(0.9932);transform-origin:0 0;">not set</div>
<div class="t" style="left:1681.03px;top:794.76px;font-size:28.88px;line-height:28.88px;font-weight:400;color:#333333;transform:scaleX(1.0783);transform-origin:0 0;">07/08/2025</div>
<div class="t" style="left:2159.65px;top:794.76px;font-size:28.88px;line-height:28.88px;font-weight:400;color:#333333;transform:scaleX(1.0422);transform-origin:0 0;">No</div>
<div class="t" style="left:2400.21px;top:794.76px;font-size:28.88px;line-height:28.88px;font-weight:400;color:#333333;transform:scaleX(0.9932);transform-origin:0 0;">not set</div>
<div class="t" style="left:2640.21px;top:794.76px;font-size:28.88px;line-height:28.88px;font-weight:400;color:#333333;transform:scaleX(0.9932);transform-origin:0 0;">not set</div>
<div class="t" style="left:2881.21px;top:794.76px;font-size:28.88px;line-height:28.88px;font-weight:400;color:#333333;transform:scaleX(0.9932);transform-origin:0 0;">not set</div>
<div class="t" style="left:3120.81px;top:794.76px;font-size:28.88px;line-height:28.88px;font-weight:400;color:#333333;transform:scaleX(0.9932);transform-origin:0 0;">not set</div>
<div style="left:480px;top:491px;width:2880px;height:2px;background:#d3dde7;"></div>
<div style="left:480px;top:581px;width:2880px;height:2px;background:#d3dde7;"></div>
<div style="left:480px;top:671px;width:2880px;height:2px;background:#d3dde7;"></div>
<div style="left:480px;top:761px;width:2880px;height:2px;background:#d3dde7;"></div>
<div style="left:480px;top:124px;width:1px;height:278px;background:#f6f8fb;"></div>
<div style="left:480px;top:402px;width:2px;height:1162px;background:#d6dfe8;"></div>
<div style="left:485px;top:671px;width:2854px;height:78px;border:6px solid #ff8a00;border-radius:15px;"></div>
<div style="left:971px;top:686px;width:56px;height:56px;border-radius:50%;background:#ff8500;"></div>
<div class="t" style="left:971px;top:685px;width:56px;height:56px;line-height:56px;text-align:center;font-size:31px;color:#111;">2</div>
<svg style="left:480px;top:740px" width="400" height="120" viewBox="480 740 400 120">
<path d="M495 848.5 L835 783" stroke="#ff8a00" stroke-width="13" stroke-linecap="butt" stroke-linejoin="round"/>
<path d="M823 763 L862 776 L830 803 Z" fill="#ff8a00" stroke="#ff8a00" stroke-width="4" stroke-linejoin="round"/>
</svg>
<div style="left:480px;top:1562px;width:2880px;height:2px;background:#cfdbe4;"></div>
<div style="left:3220px;top:1372px;width:100px;height:100px;border-radius:50%;background:#0462c8;box-shadow:0 2px 8px rgba(0,40,90,0.18);"></div>
<svg style="left:3230px;top:1382px" width="80" height="80" viewBox="0 0 80 80"><path d="M27.2 29.1 C28.5 22.5 33.5 19.1 40 19.1 C47.5 19.1 53.1 23.5 53.1 30 C53.1 35.5 49.5 38.2 45.5 41.6 C41.5 45 39.5 46.5 39.5 49.8" fill="none" stroke="#fff" stroke-width="9" stroke-linecap="round"/><circle cx="39.5" cy="62.5" r="5.5" fill="#fff"/></svg>
<div style="left:3358px;top:0px;width:2px;height:124px;background:rgba(255,255,255,0.25);"></div>
<div style="left:3358px;top:124px;width:2px;height:278px;background:rgba(255,255,255,0.3);"></div>
<div style="left:3358px;top:402px;width:2px;height:1162px;background:#d8e2ea;"></div>
<div style="left:474px;top:1611px;width:2886px;height:1px;background:#cfd3d8;"></div>
<div style="left:300px;top:1610px;width:174px;height:2px;background:#50565f;"></div>
<svg style="left:3280px;top:1540px" width="80" height="72" viewBox="0 0 80 72"><path d="M80 14 L78.5 18 L78 27 L78.00 27.00 L77.96 33.16 L77.85 36.76 L77.67 39.77 L77.42 42.44 L77.09 44.87 L76.68 47.11 L76.21 49.20 L75.66 51.15 L75.04 52.99 L74.34 54.72 L73.57 56.34 L72.73 57.87 L71.81 59.31 L70.82 60.66 L69.75 61.92 L68.60 63.10 L67.37 64.19 L66.07 65.20 L64.68 66.13 L63.20 66.98 L61.63 67.74 L59.96 68.43 L58.18 69.03 L56.28 69.55 L54.25 69.99 L52.04 70.36 L49.61 70.64 L46.88 70.84 L43.60 70.96 L38.00 71.00 L20 71.5 L20 72 L80 72 Z" fill="#1f1810"/></svg>
</div></body></html>
